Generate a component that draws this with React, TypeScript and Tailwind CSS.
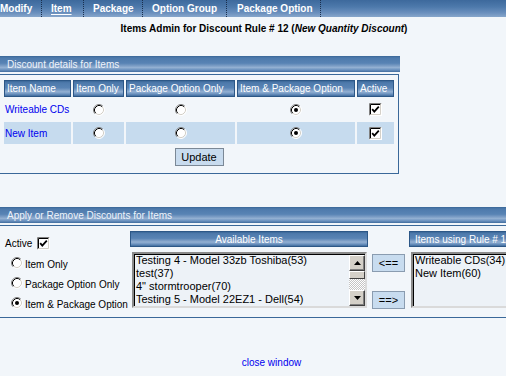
import React from 'react';

const barBg =
  'bg-[linear-gradient(180deg,#3a6797_0%,#4e7aac_12%,#5883b4_45%,#7d9ec6_62%,#93b0d2_72%,#6d93c0_86%,#416d9e_100%)]';

function Radio({ checked }: { checked?: boolean }) {
  return (
    <svg width="12" height="12" viewBox="0 0 12 12" className="block">
      <circle cx="6" cy="6" r="5" fill="#fff" />
      <path d="M2.11 9.89A5.5 5.5 0 0 1 9.89 2.11" fill="none" stroke="#808080" />
      <path d="M9.89 2.11A5.5 5.5 0 0 1 2.11 9.89" fill="none" stroke="#fff" />
      <path d="M2.82 9.18A4.5 4.5 0 0 1 9.18 2.82" fill="none" stroke="#000" />
      <path d="M9.18 2.82A4.5 4.5 0 0 1 2.82 9.18" fill="none" stroke="#d4d0c8" />
      {checked && <circle cx="6" cy="6" r="2" fill="#000" />}
    </svg>
  );
}

function Check() {
  return (
    <svg width="13" height="13" viewBox="0 0 13 13" className="block">
      <rect width="13" height="13" fill="#fff" />
      <path d="M0.5 12.5V0.5H12.5" fill="none" stroke="#808080" />
      <path d="M1.5 11.5V1.5H11.5" fill="none" stroke="#000" />
      <path d="M0.5 12.5H12.5V0.5" fill="none" stroke="#fff" />
      <path d="M1.5 11.5H11.5V1.5" fill="none" stroke="#d4d0c8" />
      <path d="M3.2 6.2L5.3 8.6L9.8 3.6" fill="none" stroke="#000" strokeWidth="1.8" />
    </svg>
  );
}

function ScrollBtn({ up }: { up?: boolean }) {
  return (
    <div className="flex h-[16px] w-[16px] items-center justify-center border border-t-white border-l-white border-b-[#404040] border-r-[#404040] bg-[#d4d0c8] shadow-[inset_-1px_-1px_0_#808080]">
      <svg width="7" height="4" viewBox="0 0 7 4">
        <path d={up ? 'M3.5 0L7 4H0Z' : 'M0 0H7L3.5 4Z'} fill="#000" />
      </svg>
    </div>
  );
}

function ListBox({ items, scroll, className }: { items: string[]; scroll?: boolean; className: string }) {
  return (
    <div
      className={`flex h-[56px] border-2 border-t-[#8a8a8a] border-l-[#8a8a8a] border-b-[#dadada] border-r-[#dadada] bg-[#edf2f7] shadow-[inset_1px_1px_0_#000] ${className}`}
    >
      <div className="flex-1 overflow-hidden pl-[2px] text-[11px] leading-[13px] whitespace-nowrap text-black">
        {items.map((t) => (
          <div key={t}>{t}</div>
        ))}
      </div>
      {scroll && (
        <div className="flex w-[16px] flex-col pt-[1px]">
          <ScrollBtn up />
          <div className="h-[8px] border border-t-white border-l-white border-b-[#404040] border-r-[#404040] bg-[#d4d0c8]" />
          <div className="flex-1 bg-[repeating-conic-gradient(#c4c4c4_0_25%,#ffffff_0_50%)] bg-[length:2px_2px]" />
          <ScrollBtn />
        </div>
      )}
    </div>
  );
}

const nav = [
  { label: 'Modify', w: 'w-[42px]', pl: 'pl-0' },
  { label: 'Item', w: 'w-[42px]', pl: 'pl-[9px]', active: true },
  { label: 'Package', w: 'w-[59px]', pl: 'pl-[9px]' },
  { label: 'Option Group', w: 'w-[84px]', pl: 'pl-[9px]' },
  { label: 'Package Option', w: 'w-[94px]', pl: 'pl-[10px]' },
];

const th = `h-[16px] border border-[#2c5787] px-[2px] text-left font-normal text-white whitespace-nowrap ${barBg}`;

export default function App() {
  return (
    <div className="h-[376px] w-[506px] overflow-hidden bg-[#f2f6fa] font-['Liberation_Sans',Arial,sans-serif] text-[10px] text-black">
      <div className="flex h-[17px] bg-[linear-gradient(180deg,#3d699c_0%,#4d79ab_40%,#6a8fbd_75%,#87a6cb_100%)]">
        {nav.map((n) => (
          <div
            key={n.label}
            className={`flex h-full shrink-0 items-center border-r border-dotted border-[#1a2f4d] ${n.w} ${n.pl} font-bold text-white`}
          >
            <span className={n.active ? 'underline underline-offset-2' : ''}>{n.label}</span>
          </div>
        ))}
      </div>

      <div className="pt-[6px] pl-[22px] text-center leading-[12px] font-bold">
        Items Admin for Discount Rule # 12 (<i>New Quantity Discount</i>)
      </div>

      <div className={`mt-[21px] flex h-[16px] w-[400px] items-center pl-[7px] text-[#eef3fa] ${barBg}`}>
        Discount details for Items
      </div>
      <div className="mt-[2px] w-[399px] border-t border-r border-b border-[#3a6899] pt-[3px] pb-[7px] pl-[2px]">
        <table className="border-separate border-spacing-[2px]">
          <thead>
            <tr>
              <th className={`${th} w-[67px]`}>Item Name</th>
              <th className={`${th} w-[51px]`}>Item Only</th>
              <th className={`${th} w-[109px]`}>Package Option Only</th>
              <th className={`${th} w-[118px]`}>Item &amp; Package Option</th>
              <th className={`${th} w-[37px]`}>Active</th>
            </tr>
          </thead>
          <tbody>
            {[
              { name: 'Writeable CDs', bg: '', h: 'h-[21px]' },
              { name: 'New Item', bg: 'bg-[#c6dbee]', h: 'h-[22px]' },
            ].map((r) => (
              <tr key={r.name} className={r.h}>
                <td className={`${r.bg} px-[1px] text-[#0000ee]`}>{r.name}</td>
                <td className={r.bg}>
                  <div className="flex justify-center"><Radio /></div>
                </td>
                <td className={r.bg}>
                  <div className="flex justify-center"><Radio /></div>
                </td>
                <td className={r.bg}>
                  <div className="flex justify-center"><Radio checked /></div>
                </td>
                <td className={r.bg}>
                  <div className="flex justify-center"><Check /></div>
                </td>
              </tr>
            ))}
          </tbody>
        </table>
        <div className="flex w-[394px] justify-center">
          <button className="mt-[2px] h-[18px] w-[49px] border border-[#7b8896] bg-[#c8dbee] text-[11px] text-black">
            Update
          </button>
        </div>
      </div>

      <div className={`mt-[33px] flex h-[16px] w-full items-center pl-[7px] text-[#eef3fa] ${barBg}`}>
        Apply or Remove Discounts for Items
      </div>
      <div className="mt-[2px] flex h-[93px] w-full border-y border-[#3a6899] pt-[5px]">
        <div className="w-[130px] shrink-0 pl-[5px]">
          <div className="mt-[6px] flex h-[13px] items-center gap-[5px]">
            <span>Active</span>
            <Check />
          </div>
          <div className="mt-[7px] pl-[6px]">
            {[
              { label: 'Item Only' },
              { label: 'Package Option Only' },
              { label: 'Item & Package Option', checked: true },
            ].map((o) => (
              <div key={o.label} className="flex h-[20px] items-start gap-[2px]">
                <Radio checked={o.checked} />
                <span className="mt-[2px] leading-[12px] whitespace-nowrap">{o.label}</span>
              </div>
            ))}
          </div>
        </div>

        <div className="w-[238px] shrink-0">
          <div className={`flex h-[16px] items-center justify-center border border-[#2c5787] text-white ${barBg}`}>
            Available Items
          </div>
          <ListBox
            scroll
            className="mt-[5px] ml-[2px] w-[235px]"
            items={[
              'Testing 4 - Model 33zb Toshiba(53)',
              'test(37)',
              '4" stormtrooper(70)',
              'Testing 5 - Model 22EZ1 - Dell(54)',
            ]}
          />
        </div>

        <div className="w-[41px] shrink-0 pl-[4px]">
          <button className="mt-[23px] block h-[18px] w-[33px] border border-[#8a9cb0] bg-[#c8dcef] text-[11px] text-black">
            &lt;==
          </button>
          <button className="mt-[19px] block h-[18px] w-[33px] border border-[#8a9cb0] bg-[#c8dcef] text-[11px] text-black">
            ==&gt;
          </button>
        </div>

        <div className="w-[130px] shrink-0">
          <div className={`flex h-[16px] items-center border border-[#2c5787] pl-[5px] whitespace-nowrap text-white ${barBg}`}>
            Items using Rule # 12
          </div>
          <ListBox className="mt-[5px] ml-[2px] w-[128px]" items={['Writeable CDs(34)', 'New Item(60)']} />
        </div>
      </div>

      <div className="mt-[39px] pl-[37px] text-center leading-[12px] text-[#0000ee]">close window</div>
    </div>
  );
}
